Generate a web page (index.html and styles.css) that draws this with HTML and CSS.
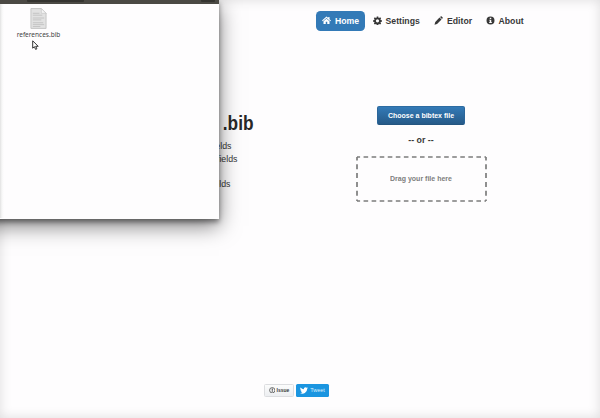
FILE: index.html
```html
<!DOCTYPE html>
<html lang="en">
<head>
<meta charset="utf-8">
<title>.bib</title>
<link rel="stylesheet" href="styles.css">
</head>
<body>
<div class="page">
  <nav class="nav">
    <a class="tab active"><svg viewBox="0 0 18 18"><path d="M9 1 0 9l1.500 1.700L9 4l7.500 6.700L18 9l-3-2.700V2h-2.500v2zM9 5.500 3 10.700V16h4.500v-4.500h3V16H15v-5.300z"/></svg><span class="tall">Home</span></a>
    <a class="tab settings"><svg viewBox="0 0 18 18"><path fill-rule="evenodd" d="M7.500 1h3l.5 2.300 1.200.5 2-1.300 2.100 2.100-1.300 2 .5 1.200 2.300.5v3l-2.300.5-.5 1.200 1.300 2-2.100 2.100-2-1.300-1.200.5-.5 2.300h-3L7 16.300l-1.200-.5-2 1.300L1.700 15 3 13l-.5-1.200L.2 11.300v-3l2.300-.5L3 6.600l-1.300-2 2.100-2.100 2 1.300L7 3.300zM9 6.500a3.200 3.200 0 1 0 0 6.400 3.200 3.200 0 0 0 0-6.400z"/></svg><span class="tall">Settings</span></a>
    <a class="tab editor"><svg viewBox="0 0 18 18"><path d="m12 2 1.500-1.200q1-.7 2 .3l1.500 1.500q1 1 .2 2L16 6zM11 3l4 4-9 9-5 1.500L2.500 12z"/></svg><span class="tall">Editor</span></a>
    <a class="tab about"><svg viewBox="0 0 18 18"><path fill-rule="evenodd" d="M9 1a8 8 0 1 0 0 16A8 8 0 0 0 9 1zM7.500 3.500h3V6h-3zM6.500 7.500h4v5H12V14H6v-1.500h1.500V9h-1z"/></svg><span class="tall">About</span></a>
  </nav>
  <main class="main">
    <section class="intro">
      <h1 class="tall">.bib</h1>
      <ul>
        <li class="tall first">fields</li>
        <li class="tall second">fields</li>
        <li class="blank"></li>
        <li class="tall last">fields</li>
      </ul>
    </section>
    <section class="upload">
      <button class="choose"><span class="tall">Choose a bibtex file</span></button>
      <p class="or tall">-- or --</p>
      <div class="drop"><span class="tall">Drag your file here</span><svg class="outline" viewBox="0 0 131 46"><path class="across" d="M1 1h129M1 45h129"/><path class="down" d="M1 1v44M130 1v44"/></svg></div>
    </section>
  </main>
  <footer class="footer">
    <a class="social issue"><svg viewBox="0 0 14 14"><circle cx="7" cy="7" r="5.700" fill="none" stroke="currentColor" stroke-width="1.500"/><path d="M6 3h2v5H6zM6 9h2v2H6z"/></svg><span class="tall">Issue</span></a>
    <a class="social tweet"><svg viewBox="0 0 24 20"><path d="M24 2.400a10 10 0 0 1-2.800.8A5 5 0 0 0 23.300.5a10 10 0 0 1-3.100 1.200 4.900 4.900 0 0 0-8.400 4.500A14 14 0 0 1 1.700 1a4.900 4.900 0 0 0 1.500 6.600A5 5 0 0 1 1 7a4.900 4.900 0 0 0 3.900 4.800 5 5 0 0 1-2.200.1 4.900 4.900 0 0 0 4.600 3.400A10 10 0 0 1 0 17.300 14 14 0 0 0 21.500 4.900 10 10 0 0 0 24 2.400z"/></svg><span class="tall">Tweet</span></a>
  </footer>
</div>
<aside class="window">
  <div class="titlebar"><i class="path"></i><i class="tools"></i></div>
  <div class="files">
    <figure class="file">
      <svg viewBox="0 0 18 22"><path d="M1 .5h11l5 5v16H1z" fill="#e2e2e2" stroke="#c4c4c4"/><path d="M12 .5v5h5z" fill="#f5f5f5" stroke="#c4c4c4" stroke-width=".7"/><path d="M3 5.500h7M3 7.500h10M3 10.500h12M3 12.500h9M3 15.500h11M3 17.500h12M3 19.500h8" stroke="#bbb" stroke-width=".8"/></svg>
      <figcaption class="tall">references.bib</figcaption>
    </figure>
  </div>
</aside>
<svg class="cursor" viewBox="0 0 7 10"><path d="M.7.8v7.400l1.700-1.500 1.200 2.700 1.300-.6-1.200-2.500h2.500z" fill="#fff" stroke="#333" stroke-width="1"/></svg>
</body>
</html>
```
FILE: styles.css
```css
* { box-sizing: border-box; }
body {
  margin: 0;
  overflow: hidden;
  font-family: "Liberation Sans", Arial, sans-serif;
  color: #383838;
}
svg { display: block; flex: none; fill: currentColor; }
.tall { transform: scaleY(1.12); }
span.tall { display: inline-block; }
.page {
  width: 600px;
  height: 418px;
  display: flex;
  flex-direction: column;
  background: #fefdfe;
  box-shadow: inset 0 0 12px rgba(0, 0, 0, .13);
}
.nav {
  display: flex;
  padding: 11px 0 0 316px;
  height: 31px;
  flex: none;
}
.tab {
  display: flex;
  align-items: center;
  height: 19.500px;
  width: 49px;
  padding-left: 6px;
  gap: 4px;
  border-radius: 4.500px;
  font-size: 8.700px;
  font-weight: bold;
}
.tab svg { width: 9px; height: 9px; }
.active { background: #337ab7; color: #fff; }
.settings { width: 62px; padding-left: 8px; gap: 3.500px; }
.editor { width: 52px; padding-left: 7px; }
.about { padding-left: 7px; gap: 3.500px; }
.main {
  display: grid;
  grid-template-columns: 355.500px 131px;
  padding-top: 75px;
  flex: 1;
}
.intro { padding-top: 7px; }
h1 {
  margin: 0;
  width: 253.500px;
  text-align: right;
  font-size: 17.300px;
  line-height: 20px;
  color: #282828;
}
ul { list-style: none; margin: 7px 0 0; padding: 0; }
li { height: 12.800px; line-height: 12.800px; font-size: 8.800px; text-align: right; }
.first { width: 231.500px; }
.second { width: 237.500px; }
.last { width: 230.500px; }
.upload { display: flex; flex-direction: column; align-items: center; }
.choose {
  width: 88px;
  height: 18.500px;
  padding: 0;
  border: 1px solid #245580;
  border-color: #2d6ca2 #2b669a #245580;
  border-radius: 2px;
  background: linear-gradient(#337ab7, #265a88);
  color: #fff;
  font: bold 7px "Liberation Sans", Arial, sans-serif;
}
.or { margin: 10.500px 0 9.500px; font-size: 8.800px; line-height: 11px; font-weight: bold; }
.drop {
  position: relative;
  width: 131px;
  height: 46px;
  display: flex;
  align-items: center;
  justify-content: center;
  color: #7d7d7d;
  font-size: 7px;
  font-weight: bold;
}
.outline { position: absolute; inset: 0; width: 131px; height: 46px; overflow: visible; fill: none; stroke: #7c7c7c; stroke-width: 1.700; }
.across { stroke-dasharray: 4.600 3.460; stroke-dashoffset: 1.500; }
.down { stroke-dasharray: 5 3.800; stroke-dashoffset: 1.500; }
.footer { display: flex; gap: 2px; padding: 0 0 21.500px 264px; }
.social {
  display: flex;
  align-items: center;
  justify-content: center;
  gap: 1.500px;
  width: 30px;
  height: 13px;
  border-radius: 1.500px;
  font-size: 5px;
}
.issue { border: 1px solid #dcdde0; background: linear-gradient(#fcfcfc, #eceef1); font-weight: bold; }
.issue svg { width: 6.500px; height: 6.500px; }
.tweet { width: 33px; background: #1b95e0; color: #d9efff; gap: 2px; font-size: 5.500px; }
.tweet svg { width: 8px; height: 7px; color: #fff; }
.window {
  position: absolute;
  left: -20px;
  top: 0;
  width: 239px;
  height: 218.500px;
  background: #fefdfe;
  box-shadow: 0 3px 5px rgba(0, 0, 0, .42), 0 7px 20px rgba(0, 0, 0, .5);
}
.titlebar { display: flex; justify-content: space-between; height: 4px; padding: 0 4px 2px 47px; background: #4b4944; }
.titlebar i { display: block; height: 2px; border-radius: 0 0 1px 1px; background: #353430; }
.path { width: 57px; }
.tools { width: 14px; }
.files { height: 214px; margin-left: 20px; padding: 4px 0 0 17px; background: linear-gradient(90deg, #e2e2e2, #f7f7f7 2px, #fefdfe 4px); }
.file { margin: 0; width: 43px; display: flex; flex-direction: column; align-items: center; }
.file svg { width: 17px; height: 21px; }
figcaption { margin-top: .5px; font: 6.500px/9px "Noto Sans", sans-serif; white-space: nowrap; color: #444; }
.cursor { position: absolute; left: 31.500px; top: 39.500px; width: 7px; height: 10px; }
```
